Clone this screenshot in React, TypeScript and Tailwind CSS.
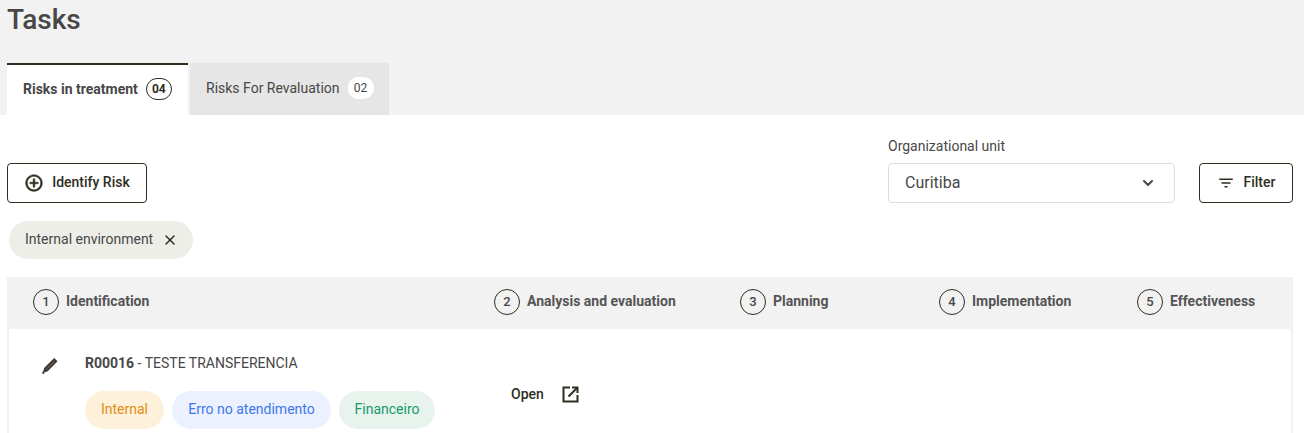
import { ChevronDown, X } from 'lucide-react'

const steps = [
  { n: 1, label: 'Identification', width: 'w-[461px]' },
  { n: 2, label: 'Analysis and evaluation', width: 'w-[246px]' },
  { n: 3, label: 'Planning', width: 'w-[199px]' },
  { n: 4, label: 'Implementation', width: 'w-[198px]' },
  { n: 5, label: 'Effectiveness', width: '' },
]

const tags = [
  { label: 'Internal', className: 'w-[79px] bg-[#fdf1dc] text-[#df8f12]' },
  { label: 'Erro no atendimento', className: 'w-[159px] bg-[#ebf1fe] text-[#3f78ea]' },
  { label: 'Financeiro', className: 'w-[96px] bg-[#e9f3ee] text-[#159a6c]' },
]

export default function App() {
  return (
    <div className="h-[433px] overflow-hidden bg-white font-['Roboto',sans-serif] text-[#474747]">
      <header className="h-[115px] bg-[#f2f2f2] pl-[7px]">
        <h1 className="h-[63px] text-[28px] leading-[40px] font-medium">Tasks</h1>
        <div className="flex gap-0.5">
          <div className="flex h-[52px] w-[181px] items-center gap-2 border-t-2 border-[#2f2d1e] bg-white pb-0.5 pl-4 text-sm font-bold">
            <span>Risks in treatment</span>
            <span className="flex h-[22px] w-[26px] items-center justify-center rounded-full border border-[#2f2d1e] text-xs text-[#2f2d1e]">04</span>
          </div>
          <div className="flex h-[52px] w-[199px] items-center gap-2 bg-[#e6e6e6] pb-0.5 pl-4 text-sm">
            <span>Risks For Revaluation</span>
            <span className="flex h-[22px] w-[26px] items-center justify-center rounded-full bg-white text-xs">02</span>
          </div>
        </div>
      </header>

      <main className="px-[7px]">
        <div className="flex h-[88px] items-end">
          <button className="flex h-10 w-[140px] items-center justify-center gap-2 rounded border border-[#2f2d1e] pb-0.5 text-sm font-medium text-[#2f2d1e]">
            <svg width="20" height="20" viewBox="0 0 24 24" fill="#2f2d1e" stroke="#2f2d1e" strokeWidth="0.6" className="mt-0.5">
              <path d="M13 7h-2v4H7v2h4v4h2v-4h4v-2h-4V7zm-1-5C6.48 2 2 6.48 2 12s4.48 10 10 10 10-4.48 10-10S17.52 2 12 2zm0 18c-4.41 0-8-3.59-8-8s3.59-8 8-8 8 3.59 8 8-3.59 8-8 8z" />
            </svg>
            Identify Risk
          </button>
          <div className="ml-[741px]">
            <div className="mb-[8px] text-sm leading-[18px]">Organizational unit</div>
            <div className="flex h-10 w-[287px] items-center justify-between rounded border border-[#dedede] pr-[18px] pl-4 text-base">
              Curitiba
              <ChevronDown size={16} strokeWidth={3} />
            </div>
          </div>
          <button className="ml-6 flex h-10 w-[94px] items-center justify-center gap-[9px] rounded border border-[#2f2d1e] pb-0.5 text-sm font-medium text-[#2f2d1e]">
            <svg width="18" height="18" viewBox="0 0 24 24" fill="#2f2d1e" className="mt-0.5">
              <path d="M10 18h4v-2h-4v2zM3 6v2h18V6H3zm3 7h12v-2H6v2z" />
            </svg>
            Filter
          </button>
        </div>

        <div className="mt-[18px] ml-0.5 flex h-[38px] w-[184px] items-center gap-[10px] rounded-full bg-[#eeeee8] pb-0.5 pl-4 text-sm">
          Internal environment
          <X size={16} strokeWidth={2.2} className="mt-0.5 -ml-px text-[#2f2d1e]" />
        </div>

        <div className="mt-[18px] flex h-[52px] w-[1286px] items-center bg-[#f2f2f2] pb-0.5 pl-[26px]">
          {steps.map((step) => (
            <div key={step.n} className={`flex items-center gap-[7px] ${step.width}`}>
              <span className="flex h-[26px] w-[26px] items-center justify-center rounded-full border border-[#2f2d1e] text-[13px] font-medium">{step.n}</span>
              <span className="pb-0.5 text-sm font-bold text-[#555]">{step.label}</span>
            </div>
          ))}
        </div>

        <div className="flex h-[104px] w-[1286px] border-x-2 border-[#f2f2f2] pl-[31px]">
          <div className="w-[45px] pt-[26px]">
            <svg width="20" height="20" viewBox="0 0 24 24" fill="#6b5a4e" stroke="#3f3a38" strokeWidth="2.4">
              <path d="M5.2 19.5l.8-3.2L17 5.2l2.4 2.4L8.4 18.7z" />
              <path d="M3 22l2-1.5" />
            </svg>
          </div>
          <div className="w-[426px] pt-[26px]">
            <div className="text-sm leading-4">
              <b className="font-bold">R00016</b> - TESTE TRANSFERENCIA
            </div>
            <div className="mt-5 flex gap-2">
              {tags.map((tag) => (
                <span key={tag.label} className={`flex h-[38px] items-center justify-center rounded-full pb-0.5 text-sm ${tag.className}`}>{tag.label}</span>
              ))}
            </div>
          </div>
          <div className="mt-[56px] flex h-[17px] items-center gap-[18px] self-start text-sm font-medium text-[#2f2d1e]">
            Open
            <svg width="17" height="17" viewBox="0 0 17 17" fill="none" stroke="#2f2d1e" strokeWidth="2" className="mt-0.5">
              <path d="M8 1.5H1.5v14h14V9" />
              <path d="M6.5 10.5L15 2" />
              <path d="M10 1.5h5.5V7" />
            </svg>
          </div>
        </div>
      </main>
    </div>
  )
}
